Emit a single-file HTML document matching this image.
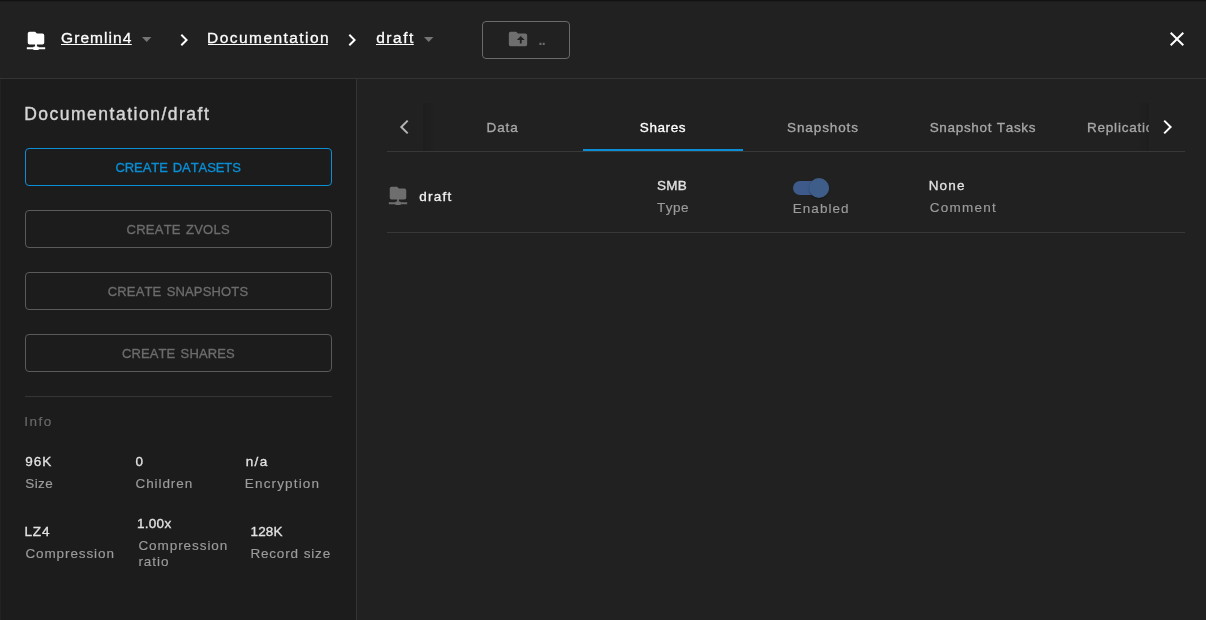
<!DOCTYPE html>
<html lang="en"><head><meta charset="utf-8"><title>Documentation/draft</title>
<style>
html,body{margin:0;padding:0;background:#212121}
body{width:1206px;height:620px;position:relative;overflow:hidden;font-family:"Liberation Sans",Arial,sans-serif;font-size:14px;color:#fff}
h2,h3,dl,dt,dd,button,a{margin:0;padding:0;font:inherit;color:inherit}
.abs{position:absolute}
.t{position:absolute;display:block;white-space:nowrap;line-height:normal;font-weight:400;font-kerning:none}
.lnk{text-decoration:none}
/* painted backgrounds */
#bg-header{left:0;top:0;width:1206px;height:78px;background:#212121;border-bottom:1px solid #343434}
#bg-top{left:0;top:0;width:1206px;height:3px;background:linear-gradient(#111 0,#111 1px,#1d1d1d 1px,#1d1d1d 2px,#202020 2px)}
#bg-side{left:0;top:79px;width:356px;height:541px;background:#1c1c1c;border-right:1px solid #343434}
#bg-edge{left:0;top:79px;width:1px;height:541px;background:#222}
/* transparent content layers (own compositing layer keeps text greyscale-smoothed) */
.layer{position:absolute;left:0;top:0;width:1206px;height:620px;will-change:transform}
.btn{position:absolute;box-sizing:border-box;border:1px solid #5a5a5a;border-radius:4px;background:transparent;display:block}
.btn.primary{border-color:#0a8fd6}
.btn.nav{border-color:#6a6a6a}
.hr{position:absolute;height:1px;background:#353535}
.line{position:absolute;height:1px;background:#383838}
.tab{position:absolute;top:103px;width:160px;height:48px}
.ink{position:absolute;left:583px;top:149px;width:160px;height:2px;background:#0a8fd6}
.fade-l{position:absolute;left:423px;top:103px;width:11px;height:48px;background:linear-gradient(90deg,rgba(0,0,0,.08),rgba(0,0,0,.045) 60%,rgba(0,0,0,0))}
.fade-r{position:absolute;left:1138px;top:103px;width:11px;height:48px;background:linear-gradient(270deg,rgba(0,0,0,.08),rgba(0,0,0,.045) 60%,rgba(0,0,0,0))}
.track{position:absolute;left:793px;top:181px;width:36px;height:14px;border-radius:7px;background:#3d5a8a}
.thumb{position:absolute;left:809px;top:178px;width:20px;height:20px;border-radius:10px;background:#3f5d89;box-shadow:0 2px 1px -1px rgba(0,0,0,.2),0 1px 1px 0 rgba(0,0,0,.14),0 1px 3px 0 rgba(0,0,0,.12)}
</style></head><body>
<div id="bg-header" class="abs"></div>
<div id="bg-top" class="abs"></div>
<div id="bg-side" class="abs"></div>
<div id="bg-edge" class="abs"></div>

<header class="layer">
<nav aria-label="Breadcrumb">
<svg class="abs" style="left:24.7px;top:29.3px" width="22" height="22" viewBox="0 0 24 24"><path fill="#fff" d="M3,15V5A2,2 0 0,1 5,3H11L13,5H19A2,2 0 0,1 21,7V15A2,2 0 0,1 19,17H13V19H14A1,1 0 0,1 15,20H22V22H15A1,1 0 0,1 14,23H10A1,1 0 0,1 9,22H2V20H9A1,1 0 0,1 10,19H11V17H5A2,2 0 0,1 3,15Z"/></svg>
<a class="t lnk" style="left:61px;top:29px;font-size:15.5px;letter-spacing:1.08px;color:#ffffff;-webkit-text-stroke:0.3px #ffffff;background:linear-gradient(#fff,#fff) no-repeat 0px 15px / 70.8px 1px;">Gremlin4</a>
<svg class="abs" style="left:142.3px;top:36.6px" width="10" height="5" viewBox="0 0 10 5"><path fill="#757575" d="M0,0H9.4L4.7,4.9Z"/></svg>
<svg class="abs" style="left:172.1px;top:28.1px" width="24" height="24" viewBox="0 0 24 24"><path fill="#fff" d="M8.59,16.58L13.17,12L8.59,7.41L10,6L16,12L10,18L8.59,16.58Z"/></svg>
<a class="t lnk" style="left:207.1px;top:29px;font-size:15.5px;letter-spacing:1.44px;color:#ffffff;-webkit-text-stroke:0.3px #ffffff;background:linear-gradient(#fff,#fff) no-repeat 1px 15px / 119.9px 1px;">Documentation</a>
<svg class="abs" style="left:340.25px;top:28.1px" width="24" height="24" viewBox="0 0 24 24"><path fill="#fff" d="M8.59,16.58L13.17,12L8.59,7.41L10,6L16,12L10,18L8.59,16.58Z"/></svg>
<a class="t lnk" style="left:376.2px;top:29px;font-size:15.5px;letter-spacing:1.52px;color:#ffffff;-webkit-text-stroke:0.3px #ffffff;background:linear-gradient(#fff,#fff) no-repeat 0px 15px / 37.8px 1px;">draft</a>
<svg class="abs" style="left:424.2px;top:36.6px" width="10" height="5" viewBox="0 0 10 5"><path fill="#757575" d="M0,0H9.4L4.7,4.9Z"/></svg>
</nav>
<button class="btn nav" type="button" disabled style="left:482px;top:21px;width:88px;height:38px">
<svg class="abs" style="left:24px;top:5.6px" width="22" height="22" viewBox="0 0 24 24"><path fill="#6e6e6e" d="M20,6A2,2 0 0,1 22,8V18A2,2 0 0,1 20,20H4A2,2 0 0,1 2,18V6A2,2 0 0,1 4,4H10L12,6H20M10.75,13H14V17H16V13H19.25L15,8.75"/></svg>
<span class="t" style="left:55.4px;top:10px;font-size:14px;letter-spacing:-0.49px;font-weight:700;color:#6e6e6e;">..</span>
</button>
<svg class="abs" style="left:1165px;top:27px" width="24" height="24" viewBox="0 0 24 24" role="img" aria-label="Close"><path fill="#fff" d="M19,6.41L17.59,5L12,10.59L6.41,5L5,6.41L10.59,12L5,17.59L6.41,19L12,13.41L17.59,19L19,17.59L13.41,12L19,6.41Z"/></svg>
</header>

<aside class="layer">
<h2 class="t" style="left:24.2px;top:104px;font-size:17.5px;letter-spacing:1.5px;color:#d6d6d6;-webkit-text-stroke:0.4px #d6d6d6;">Documentation/draft</h2>
<button class="btn primary" type="button" style="left:25px;top:148px;width:307px;height:38px"><span class="t" style="left:89.5px;top:11px;font-size:13px;letter-spacing:-0.08px;word-spacing:1.5px;color:#0a8fd6;-webkit-text-stroke:0.32px #0a8fd6;">CREATE DATASETS</span></button>
<button class="btn" type="button" disabled style="left:25px;top:210px;width:307px;height:38px"><span class="t" style="left:100.6px;top:11px;font-size:13px;letter-spacing:0.23px;word-spacing:1.5px;color:#6c6c6c;-webkit-text-stroke:0.32px #6c6c6c;">CREATE ZVOLS</span></button>
<button class="btn" type="button" disabled style="left:25px;top:272px;width:307px;height:38px"><span class="t" style="left:81.8px;top:11px;font-size:13px;letter-spacing:0.15px;word-spacing:1.5px;color:#6c6c6c;-webkit-text-stroke:0.32px #6c6c6c;">CREATE SNAPSHOTS</span></button>
<button class="btn" type="button" disabled style="left:25px;top:334px;width:307px;height:38px"><span class="t" style="left:96px;top:11px;font-size:13px;letter-spacing:0.11px;word-spacing:1.5px;color:#6c6c6c;-webkit-text-stroke:0.32px #6c6c6c;">CREATE SHARES</span></button>
<div class="hr" style="left:25px;top:396px;width:307px"></div>
<h3 class="t" style="left:24.2px;top:414px;font-size:13.5px;letter-spacing:1.5px;color:#6a6a6a;-webkit-text-stroke:0.15px #6a6a6a;">Info</h3>
<dl>
<dd class="t" style="left:25.2px;top:454px;font-size:13.5px;letter-spacing:1.04px;color:#e2e2e2;-webkit-text-stroke:0.32px #e2e2e2;">96K</dd><dt class="t" style="left:25.2px;top:476px;font-size:13.5px;letter-spacing:0.45px;color:#9c9c9c;-webkit-text-stroke:0.15px #9c9c9c;">Size</dt>
<dd class="t" style="left:135.5px;top:454px;font-size:13.5px;letter-spacing:0px;color:#e2e2e2;-webkit-text-stroke:0.32px #e2e2e2;">0</dd><dt class="t" style="left:135.5px;top:476px;font-size:13.5px;letter-spacing:0.92px;color:#9c9c9c;-webkit-text-stroke:0.15px #9c9c9c;">Children</dt>
<dd class="t" style="left:245.8px;top:454px;font-size:13.5px;letter-spacing:1.32px;color:#e2e2e2;-webkit-text-stroke:0.32px #e2e2e2;">n/a</dd><dt class="t" style="left:244.8px;top:476px;font-size:13.5px;letter-spacing:1.16px;color:#9c9c9c;-webkit-text-stroke:0.15px #9c9c9c;">Encryption</dt>
<dd class="t" style="left:24.4px;top:524px;font-size:13.5px;letter-spacing:0.92px;color:#e2e2e2;-webkit-text-stroke:0.32px #e2e2e2;">LZ4</dd><dt class="t" style="left:25.4px;top:546px;font-size:13.5px;letter-spacing:0.9px;color:#9c9c9c;-webkit-text-stroke:0.15px #9c9c9c;">Compression</dt>
<dd class="t" style="left:137px;top:516px;font-size:13.5px;letter-spacing:0.28px;color:#e2e2e2;-webkit-text-stroke:0.32px #e2e2e2;">1.00x</dd><dt class="t" style="left:138.4px;top:538px;font-size:13.5px;letter-spacing:0.94px;color:#9c9c9c;-webkit-text-stroke:0.15px #9c9c9c;line-height:16px;">Compression<br>ratio</dt>
<dd class="t" style="left:250.4px;top:524px;font-size:13.5px;letter-spacing:0.23px;color:#e2e2e2;-webkit-text-stroke:0.32px #e2e2e2;">128K</dd><dt class="t" style="left:250.4px;top:546px;font-size:13.5px;letter-spacing:0.82px;word-spacing:0.3px;color:#9c9c9c;-webkit-text-stroke:0.15px #9c9c9c;">Record size</dt>
</dl>
</aside>

<main class="layer">
<div role="tablist">
<div class="line" style="left:387px;top:151px;width:798px"></div>
<div class="tab" role="tab" style="left:423px"><span class="t" style="left:63.5px;top:17px;font-size:13.5px;letter-spacing:0.93px;color:#a8a8a8;-webkit-text-stroke:0.32px #a8a8a8;">Data</span></div>
<div class="tab" role="tab" aria-selected="true" style="left:583px"><span class="t" style="left:56.8px;top:17px;font-size:13.5px;letter-spacing:0.6px;color:#ffffff;-webkit-text-stroke:0.32px #ffffff;">Shares</span></div>
<div class="tab" role="tab" style="left:743px"><span class="t" style="left:44.1px;top:17px;font-size:13.5px;letter-spacing:0.88px;color:#a8a8a8;-webkit-text-stroke:0.32px #a8a8a8;">Snapshots</span></div>
<div class="tab" role="tab" style="left:903px"><span class="t" style="left:26.7px;top:17px;font-size:13.5px;letter-spacing:0.67px;word-spacing:0.3px;color:#a8a8a8;-webkit-text-stroke:0.32px #a8a8a8;">Snapshot Tasks</span></div>
<div class="tab" role="tab" style="left:1063px;width:86px;overflow:hidden"><span class="t" style="left:24px;top:17px;font-size:13.5px;letter-spacing:0.78px;color:#a8a8a8;-webkit-text-stroke:0.32px #a8a8a8">Replication</span></div>
<div class="ink"></div>
<div class="fade-l"></div>
<div class="fade-r"></div>
<svg class="abs" style="left:396px;top:117px" width="20" height="20" viewBox="396 117 20 20"><path fill="none" stroke="#b4b4b4" stroke-width="2" stroke-linejoin="miter" d="M407.7,120.6L401.3,127L407.7,133.4"/></svg>
<svg class="abs" style="left:1158px;top:117px" width="20" height="20" viewBox="1158 117 20 20"><path fill="none" stroke="#fff" stroke-width="2" stroke-linejoin="miter" d="M1164.2,120.6L1170.6,127L1164.2,133.4"/></svg>
</div>
<section>
<svg class="abs" style="left:387px;top:183.6px" width="22" height="22" viewBox="0 0 24 24"><path fill="#6e6e6e" d="M3,15V5A2,2 0 0,1 5,3H11L13,5H19A2,2 0 0,1 21,7V15A2,2 0 0,1 19,17H13V19H14A1,1 0 0,1 15,20H22V22H15A1,1 0 0,1 14,23H10A1,1 0 0,1 9,22H2V20H9A1,1 0 0,1 10,19H11V17H5A2,2 0 0,1 3,15Z"/></svg>
<span class="t" style="left:419.2px;top:189px;font-size:13.5px;letter-spacing:1.26px;color:#f2f2f2;-webkit-text-stroke:0.32px #f2f2f2;">draft</span>
<span class="t" style="left:657.1px;top:178px;font-size:13.5px;letter-spacing:0.22px;color:#e2e2e2;-webkit-text-stroke:0.32px #e2e2e2;">SMB</span><span class="t" style="left:657.1px;top:200px;font-size:13.5px;letter-spacing:0.47px;color:#9c9c9c;-webkit-text-stroke:0.15px #9c9c9c;">Type</span>
<div class="track"></div><div class="thumb"></div>
<span class="t" style="left:792.7px;top:201px;font-size:13.5px;letter-spacing:1.06px;color:#9c9c9c;-webkit-text-stroke:0.15px #9c9c9c;">Enabled</span>
<span class="t" style="left:928.7px;top:178px;font-size:13.5px;letter-spacing:1.18px;color:#e2e2e2;-webkit-text-stroke:0.32px #e2e2e2;">None</span><span class="t" style="left:929.7px;top:200px;font-size:13.5px;letter-spacing:1.24px;color:#9c9c9c;-webkit-text-stroke:0.15px #9c9c9c;">Comment</span>
<div class="line" style="left:387px;top:232px;width:798px"></div>
</section>
</main>
</body></html>
